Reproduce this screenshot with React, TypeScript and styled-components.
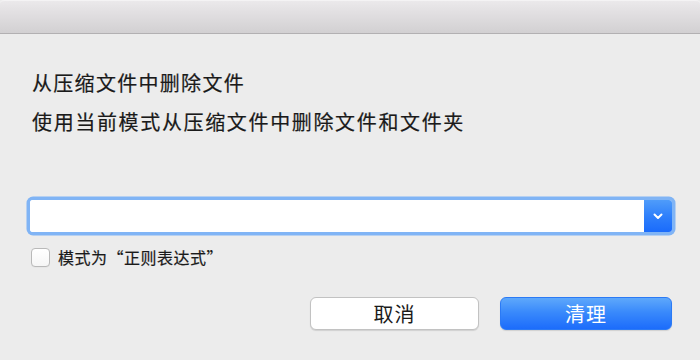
import React from 'react';
import styled, { createGlobalStyle } from 'styled-components';

const GlobalStyle = createGlobalStyle`
    html, body {
        margin: 0;
        padding: 0;
        background: #ececec;
    }
    body {
        font-family: "Noto Sans CJK SC", "Noto Sans", "Liberation Sans", sans-serif;
        color: #1a1a1a;
    }
`;

const Window = styled.div`
    width: 700px;
    height: 360px;
    background: #ececec;
    overflow: hidden;
    display: flex;
    flex-direction: column;
`;

const TitleBar = styled.div`
    flex-shrink: 0;
    background: linear-gradient(to bottom, #ebe9eb 0%, #e3e1e3 30%, #d2d0d2 100%);
    border-bottom: 1px solid #b2b0b2;
    border-top: 1px solid #f4f3f4;
    box-sizing: border-box;
    height: 34px;
    border-top-left-radius: 4px;
    border-top-right-radius: 4px;
`;

const Body = styled.div`
    padding: 35px 28px 0 30px;
    display: flex;
    flex-direction: column;
`;

const Heading = styled.div`
    font-size: 20px;
    line-height: 28px;
    letter-spacing: 1.3px;
    padding-left: 2px;
    -webkit-text-stroke: 0.2px #1a1a1a;
`;

const SubHeading = styled(Heading)`
    margin-top: 11px;
    letter-spacing: 1.65px;
`;

const Combo = styled.div`
    margin-top: 64px;
    height: 32px;
    display: flex;
    border-radius: 3px;
    box-shadow: 0 0 0 3.5px #80b4f5;
    background: #fff;
    overflow: hidden;
`;

const ComboInput = styled.input`
    flex: 1;
    border: none;
    outline: none;
    background: #fff;
    font-family: inherit;
    font-size: 16px;
    padding: 0 6px;
`;

const ComboButton = styled.div`
    width: 28px;
    background: linear-gradient(to bottom, #4f9cfa 0%, #2f80fb 50%, #1a6bfb 100%);
    display: flex;
    align-items: center;
    justify-content: center;
`;

const CheckRow = styled.label`
    margin-top: 15px;
    display: flex;
    align-items: center;
    gap: 8px;
    padding-left: 1px;
`;

const CheckBox = styled.span`
    width: 19px;
    height: 19px;
    box-sizing: border-box;
    border: 1px solid #b9b9b9;
    border-radius: 4px;
    background: linear-gradient(to bottom, #ffffff, #f6f6f6);
    box-shadow: 0 0.5px 0 rgba(0, 0, 0, 0.05);
`;

const CheckLabel = styled.span`
    font-size: 16px;
    line-height: 20px;
    letter-spacing: 0.5px;
    -webkit-text-stroke: 0.2px #1a1a1a;
`;

const Actions = styled.div`
    margin-top: 30px;
    display: flex;
    justify-content: flex-end;
    gap: 21px;
`;

interface IButton {
    primary?: boolean;
}

const Button = styled.button<IButton>`
    width: ${(props) => (props.primary ? '172px' : '169px')};
    height: 33px;
    box-sizing: border-box;
    border-radius: 6px;
    font-family: inherit;
    font-size: 20px;
    letter-spacing: 1px;
    display: flex;
    align-items: center;
    justify-content: center;
    padding: 0;
    color: ${(props) => (props.primary ? '#ffffff' : '#1a1a1a')};
    border: ${(props) => (props.primary ? '1px solid #2b7af5' : '1px solid #c2c2c2')};
    background: ${(props) =>
        props.primary
            ? 'linear-gradient(to bottom, #5ea8fb 0%, #3a8afb 45%, #1c6cfb 100%)'
            : '#ffffff'};
    box-shadow: 0 1px 1px rgba(0, 0, 0, 0.12);
`;

const App = () => {
    return (
        <Window>
            <GlobalStyle />
            <TitleBar />
            <Body>
                <Heading>从压缩文件中删除文件</Heading>
                <SubHeading>使用当前模式从压缩文件中删除文件和文件夹</SubHeading>
                <Combo>
                    <ComboInput />
                    <ComboButton>
                        <svg width="10" height="7" viewBox="0 0 10 7">
                            <polyline
                                points="1.5,1.5 5,5 8.5,1.5"
                                fill="none"
                                stroke="#ffffff"
                                strokeWidth="2"
                                strokeLinecap="round"
                                strokeLinejoin="round"
                            />
                        </svg>
                    </ComboButton>
                </Combo>
                <CheckRow>
                    <CheckBox />
                    <CheckLabel>模式为“正则表达式”</CheckLabel>
                </CheckRow>
                <Actions>
                    <Button>取消</Button>
                    <Button primary>清理</Button>
                </Actions>
            </Body>
        </Window>
    );
};

export default App;
